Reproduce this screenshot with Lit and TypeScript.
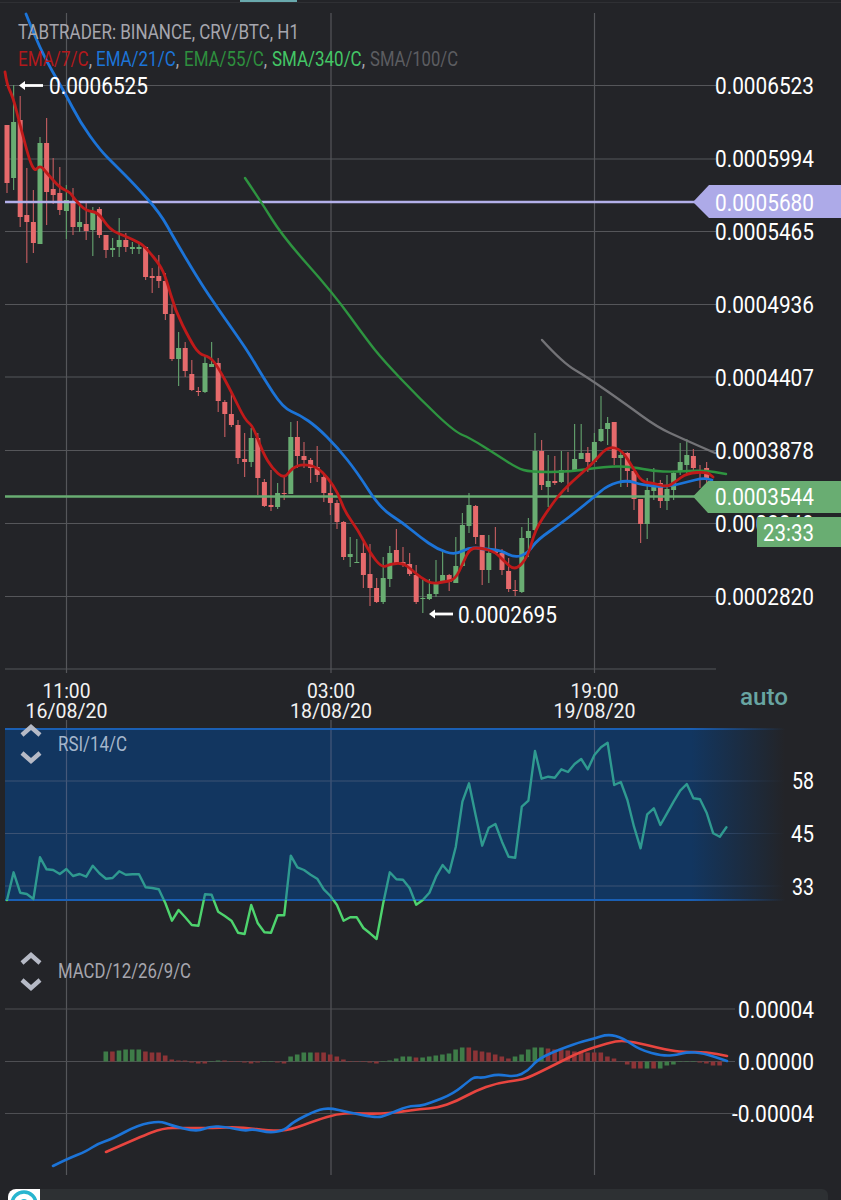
import { LitElement, css, html, svg } from 'lit';
import { customElement } from 'lit/decorators.js';

// candle x position, 6.6px per hour
const cx = (i: number) => 7 + 6.6 * i;

// [bodyTop, bodyBottom, wickTop, wickBottom, 1 = green]
const CANDLES: number[][] = [
  [125,183,125,193,0],[122,178,85,190,1],[120,217,96,227,0],[215,222,168,263,0],[222,243,190,253,0],
  [143,244,137,244,1],[143,192,118,225,0],[189,195,158,204,0],[193,210,167,215,0],[200,211,185,239,1],
  [202,227,188,235,0],[222,227,203,232,1],[224,231,203,240,0],[212,230,207,256,1],[209,235,207,238,0],
  [235,250,235,258,0],[248,250,238,257,1],[240,247,218,257,1],[240,247,233,252,0],[247,249,242,254,1],
  [247,249,242,254,1],[247,277,246,280,0],[276,278,268,293,0],[276,281,255,288,0],[281,314,273,320,0],
  [314,359,305,361,0],[348,359,332,386,1],[348,371,342,377,0],[374,390,360,391,0],[391,392,387,396,0],
  [363,392,355,393,1],[364,367,342,367,1],[363,401,358,412,0],[402,414,400,437,0],[414,425,393,427,0],
  [425,458,420,464,0],[459,462,433,477,0],[438,462,428,467,1],[438,478,433,495,0],[482,506,479,507,0],
  [505,507,470,511,0],[493,507,483,509,1],[493,494,477,500,0],[437,494,422,494,1],[437,456,421,468,0],
  [456,460,442,468,0],[460,468,458,483,0],[467,475,446,482,0],[477,493,475,502,0],[493,503,483,515,0],
  [503,522,500,529,0],[522,557,521,560,0],[554,557,537,567,1],[562,563,539,563,1],[553,575,542,588,0],
  [574,588,544,606,0],[588,602,578,603,0],[578,602,557,604,1],[553,579,546,587,1],[550,563,529,565,0],
  [562,564,547,567,0],[564,574,553,576,0],[575,602,565,604,0],[598,599,580,613,1],[594,599,579,600,1],
  [584,594,560,597,1],[575,581,552,583,1],[575,582,574,591,0],[566,583,537,583,1],[525,566,513,567,1],
  [505,526,493,533,1],[506,537,505,544,0],[535,570,535,585,0],[553,570,535,583,1],[549,553,527,553,0],
  [553,570,549,575,0],[571,589,558,592,0],[590,591,580,596,0],[538,592,527,593,1],[531,538,518,557,1],
  [451,530,433,531,1],[451,485,440,490,0],[481,487,455,507,1],[481,483,456,485,0],[470,482,451,483,1],
  [470,472,452,492,0],[459,471,424,472,1],[453,459,424,459,1],[453,462,447,472,0],[442,462,433,463,1],
  [429,441,396,442,1],[423,429,417,445,1],[422,458,422,465,0],[455,458,452,487,1],[453,471,452,487,0],
  [471,499,467,510,0],[499,524,499,543,0],[490,524,478,539,1],[487,491,468,500,1],[483,501,480,508,0],
  [489,501,475,510,1],[473,490,472,500,1],[462,472,443,475,1],[455,465,439,475,1],[456,468,449,470,0],
  [470,472,465,488,0],[468,478,462,487,0],
];

const EMA7 = '5,72 7,85 13,97 20,125 33,173 40,165 46,172 60,188 70,192 75,200 86,211 98,212 110,230 125,236 140,243 146,248 160,265 166,278 175,310 190,340 199,354 210,357 218,367 232,393 245,420 253,426 263,453 272,468 284,479 292,468 303,464 317,467 328,478 338,493 345,512 358,530 370,553 382,568 390,564 403,563 412,570 420,577 432,584 443,582 455,580 463,563 470,548 482,548 495,552 503,560 515,571 528,557 535,530 550,507 563,490 583,472 593,463 608,446 622,450 633,468 642,482 653,483 667,487 675,482 687,473 707,472 713,477';
const EMA21 = '26,14 40,50 65,93 80,122 100,150 115,165 135,185 160,213 175,240 197,277 212,300 240,340 250,355 263,377 283,408 300,415 317,427 337,447 357,472 380,508 403,523 420,537 437,549 455,555 470,547 483,549 500,550 515,558 528,553 537,540 563,522 593,498 608,485 627,480 642,485 667,487 687,482 703,478 712,480';
const EMA55 = '245,178 260,200 283,237 333,293 367,340 383,360 420,399 455,432 470,438 497,455 517,468 530,472 570,472 607,466 633,467 653,471 673,472 703,470 726,474';
const SMA100 = '542,340 563,363 587,377 627,405 657,427 683,439 715,453';

// zoom coordinates (3x) of the RSI pane, converted below
const RSI_A = [690,607,668,672,687,562,598,600,612,597,618,612,620,587,610,626,624,604,614,613,613,652,654,658,700,752,720,742,765,767,673,674,725,738,752,788,792,705,760,787,788,736,736,557,592,600,614,626,658,678,705,752,742,742,774,790,807,700,607,628,629,654,704,690,668,620,585,608,530,395,340,435,527,473,462,515,560,563,410,392,243,326,320,323,298,306,282,267,298,255,232,218,345,336,390,470,535,433,415,465,430,395,362,342,385,388,428,490,500,472];
const RSI = RSI_A.map((z, i) => `${cx(i).toFixed(1)},${(670 + z / 3).toFixed(1)}`).join(' ');

// [bar height above zero line, 1 = green]; starts at candle 15
const HIST: number[][] = [
  [10,1],[10,0],[11,1],[12,1],[12,1],[12,1],[10,0],[9,0],[9,0],[6,0],[2,0],[1,0],[1,0],[-1,0],[-2,0],[-2,0],[0.5,1],[1,1],[1,0],[0.5,0],
  [-0.5,0],[-1,0],[-2,0],[-1,0],[-0.5,1],[-0.5,1],[-1,0],[-2,0],[5,1],[7,1],[9,1],[9,1],[9,0],[9,0],[7,0],[5,0],[2,0],[0.5,0],[0.5,0],
  [-0.5,0],[-1,0],[-2,0],[-0.5,1],[1,1],[3,1],[5,1],[5,1],[4,0],[4,1],[5,1],[6,1],[7,1],[8,1],[12,1],[14,1],[14,0],[11,0],[10,0],[9,0],[7,0],[5,0],[3,0],
  [5,1],[7,1],[12,1],[14,1],[14,1],[13,0],[12,0],[12,0],[11,0],[10,0],[10,0],[9,0],[9,0],[9,0],[5,0],[3,0],[0.3,0],[-3,0],[-7,0],[-7,0],[-7,1],[-7,0],[-7,1],[-4,1],[-3,1],[-0.5,1],[-0.5,1],[-0.5,1],[-1,0],[-2,0],[-4,0],[-4,0],
];

const MACD_BLUE = '53,1166 67,1159 87,1151 97,1144 112,1139 138,1125 160,1121 170,1125 197,1132 210,1126 227,1127 245,1131 253,1129 270,1133 285,1130 293,1122 317,1110 330,1108 347,1112 377,1118 387,1115 408,1106 420,1106 430,1103 453,1094 470,1080 475,1077 483,1078 497,1074 515,1077 528,1071 537,1060 553,1052 580,1042 593,1039 608,1034 623,1038 640,1050 663,1056 677,1055 687,1052 703,1053 727,1061';
const MACD_RED = '106,1152 140,1137 163,1128 183,1128 213,1128 240,1127 273,1131 290,1130 317,1120 337,1114 353,1113 377,1114 400,1112 420,1109 437,1108 457,1101 475,1091 497,1083 520,1080 530,1077 560,1062 580,1052 608,1043 623,1040 647,1045 667,1050 683,1052 707,1052 727,1056';

const PRICES: [string, number][] = [
  ['0.0006523', 94], ['0.0005994', 167], ['0.0005465', 239.5], ['0.0004936', 313], ['0.0004407', 385.5],
  ['0.0003878', 458.5], ['0.0003349', 531.5], ['0.0002820', 604.5],
];

const GRID_Y = [85.5, 159, 231.5, 304.5, 377, 450.5, 523.5, 596.5, 669];
const GRID_X = [66.5, 331, 594.5];

// rounds the corners of a point list through the segment midpoints
const smooth = (points: string) => {
  const p = points.split(' ').map((s) => s.split(',').map(Number));
  let d = `M${p[0][0]} ${p[0][1]}`;
  for (let i = 1; i < p.length - 1; i++) {
    const mx = (p[i][0] + p[i + 1][0]) / 2;
    const my = (p[i][1] + p[i + 1][1]) / 2;
    d += `Q${p[i][0]} ${p[i][1]} ${mx} ${my}`;
  }
  const last = p[p.length - 1];
  return `${d}L${last[0]} ${last[1]}`;
};

const chevron = (x: number, y: number, up: boolean) => svg`
  <path class="chev" d=${up ? `M${x} ${y + 11}L${x + 9} ${y + 3}L${x + 18} ${y + 11}` : `M${x} ${y + 2}L${x + 9} ${y + 10}L${x + 18} ${y + 2}`}></path>`;

const arrow = (x: number, y: number) => svg`
  <path class="arrow" d="M${x + 24} ${y}H${x + 3}"></path>
  <path class="arrow-head" d="M${x} ${y}L${x + 6} ${y - 4.5}V${y + 4.5}Z"></path>`;

const label = (cls: string, x: number, y: number, w: number, t: string) => svg`
  <text class=${cls} x=${x} y=${y} textLength=${w} lengthAdjust="spacingAndGlyphs">${t}</text>`;

// legend entry with its trailing comma in the neutral colour
const legend = (cls: string, x: number, w: number, t: string, comma = true) => svg`
  <text class="leg ${cls}" x=${x} y="66" textLength=${w} lengthAdjust="spacingAndGlyphs">${t}${comma ? svg`<tspan class="leg-comma">,</tspan>` : ''}</text>`;

@customElement('app-root')
export class AppRoot extends LitElement {
  static styles = css`
    :host {
      display: block;
      width: 841px;
      height: 1200px;
      overflow: hidden;
      background: #232428;
    }

    .top {
      display: flex;
      height: 3px;
      border-bottom: 1px solid #2f3034;
      box-sizing: border-box;
      padding-left: 240px;
    }

    .tab {
      width: 57px;
      height: 2px;
      background: #69a9ad;
    }

    svg.chart {
      display: block;
      width: 841px;
      height: 1186px;
    }

    text {
      font-family: Roboto, "Noto Sans", sans-serif;
    }

    .grid { stroke: #55565a; stroke-width: 1.2; fill: none; }
    .grid-v { stroke: #55565a; stroke-width: 1.2; fill: none; }
    .grid-vb { stroke: #46597a; stroke-width: 1.2; fill: none; }
    .grid-m { stroke: #4e4f53; stroke-width: 1.2; fill: none; }
    .up { fill: #69ad72; }
    .down { fill: #e66a6c; }
    .wick-up { stroke: #5f9a69; stroke-width: 1.2; }
    .wick-down { stroke: #b9595c; stroke-width: 1.2; }
    .hist-up { fill: #3e7c48; }
    .hist-down { fill: #8c3437; }

    .ln { fill: none; stroke-width: 2.4; stroke-linejoin: round; stroke-linecap: round; }
    .ema7 { stroke: #c01a1a; stroke-width: 2.8; }
    .ema21 { stroke: #1c74d8; stroke-width: 2.8; }
    .ema55 { stroke: #2e9440; }
    .sma100 { stroke: #737377; }
    .rsi-low { stroke: #4ed46e; }
    .rsi-in { stroke: #2f9a90; }
    .macd-blue { stroke: #1c74d8; stroke-width: 2.6; }
    .macd-red { stroke: #e8453f; stroke-width: 2.6; }

    .purple-line { stroke: #b3b0ea; stroke-width: 2.6; }
    .green-line { stroke: #69ad72; stroke-width: 2.4; }
    .purple-tag { fill: #adaae8; }
    .green-tag { fill: #69ad72; }

    .chev { fill: none; stroke: #b6bac6; stroke-width: 4.4; }
    .arrow { stroke: #ffffff; stroke-width: 2.8; }
    .arrow-head { fill: #ffffff; }

    .price { font-size: 24.5px; fill: #ffffff; }
    .time { font-size: 19.5px; fill: #f2f2f2; }
    .auto { font-size: 23px; font-weight: 500; fill: #68a5a2; }
    .title { font-size: 20px; fill: #a6a6ae; }
    .rsi-title { font-size: 20px; fill: #a5b6cc; }
    .leg { font-size: 20px; }
    .leg-comma { fill: #a6a6ae; }
    .leg-red { fill: #b3191c; }
    .leg-blue { fill: #1c74d8; }
    .leg-green { fill: #2e8f3e; }
    .leg-lime { fill: #43c766; }
    .leg-grey { fill: #5c5d61; }

    .footer {
      display: flex;
      height: 11px;
      padding-left: 8px;
      padding-right: 13px;
    }

    .badge {
      width: 32px;
      height: 11px;
      overflow: hidden;
      background: #ffffff;
      border-top-left-radius: 8px;
    }

    .badge svg {
      display: block;
    }

    .bar {
      flex: 1;
      background: #2d3033;
      border-top-right-radius: 6px;
    }
  `;

  render() {
    return html`
      <div class="top"><div class="tab"></div></div>
      <svg class="chart" viewBox="0 3 841 1186" xmlns="http://www.w3.org/2000/svg">
        <defs>
          <linearGradient id="band" x1="5" x2="785" y1="0" y2="0" gradientUnits="userSpaceOnUse">
            <stop offset="0" stop-color="#123660"></stop>
            <stop offset="0.88" stop-color="#123660"></stop>
            <stop offset="1" stop-color="#123660" stop-opacity="0"></stop>
          </linearGradient>
          <linearGradient id="edge" x1="5" x2="785" y1="0" y2="0" gradientUnits="userSpaceOnUse">
            <stop offset="0" stop-color="#1a5fb4"></stop>
            <stop offset="0.88" stop-color="#1a5fb4"></stop>
            <stop offset="1" stop-color="#1a5fb4" stop-opacity="0"></stop>
          </linearGradient>
          <linearGradient id="band-grid" x1="5" x2="785" y1="0" y2="0" gradientUnits="userSpaceOnUse">
            <stop offset="0" stop-color="#3b5273"></stop>
            <stop offset="0.88" stop-color="#3b5273"></stop>
            <stop offset="1" stop-color="#3b5273" stop-opacity="0"></stop>
          </linearGradient>
          <clipPath id="in-band"><rect x="0" y="729" width="841" height="171"></rect></clipPath>
          <clipPath id="below-band"><rect x="0" y="900" width="841" height="60"></rect></clipPath>
        </defs>

        <!-- RSI band sits under the grid -->
        <rect x="5" y="729" width="780" height="171" fill="url(#band)"></rect>

        ${GRID_Y.map((y) => svg`<path class="grid" d="M5 ${y}H716"></path>`)}
        ${GRID_X.map((x) => svg`
          <path class="grid-v" d="M${x} 13V673"></path>
          <path class="grid-v" d="M${x} 720V729"></path>
          <path class="grid-vb" d="M${x} 729V900"></path>
          <path class="grid-v" d="M${x} 900V1175"></path>`)}
        ${[781, 833.5, 886].map((y) => svg`<path d="M5 ${y}H785" stroke="url(#band-grid)" stroke-width="1.2" fill="none"></path>`)}
        ${[1009, 1061.5, 1113.5].map((y) => svg`<path class="grid-m" d="M5 ${y}H735"></path>`)}

        <!-- candles -->
        ${CANDLES.map((c, i) => {
          const x = cx(i);
          return svg`
            <path class=${c[4] ? 'wick-up' : 'wick-down'} d="M${x} ${c[2]}V${c[3]}"></path>
            <rect class=${c[4] ? 'up' : 'down'} x=${x - 2.5} y=${c[0]} width="5" height=${Math.max(c[1] - c[0], 1)}></rect>`;
        })}

        <path class="purple-line" d="M5 202H695"></path>
        <path class="green-line" d="M5 496.5H695"></path>

        <path class="ln sma100" d=${smooth(SMA100)}></path>
        <path class="ln ema55" d=${smooth(EMA55)}></path>
        <path class="ln ema21" d=${smooth(EMA21)}></path>
        <path class="ln ema7" d=${smooth(EMA7)}></path>

        <!-- legend -->
        ${label('title', 18, 39, 281, 'TABTRADER: BINANCE, CRV/BTC, H1')}
        ${legend('leg-red', 18, 74, 'EMA/7/C')}
        ${legend('leg-blue', 96, 83, 'EMA/21/C')}
        ${legend('leg-green', 184, 83, 'EMA/55/C')}
        ${legend('leg-lime', 272, 93, 'SMA/340/C')}
        ${legend('leg-grey', 370, 88, 'SMA/100/C', false)}

        ${arrow(19, 85.5)}
        ${label('price', 49, 94, 99, '0.0006525')}
        ${arrow(429, 614)}
        ${label('price', 458, 623, 99, '0.0002695')}

        <!-- price axis -->
        ${PRICES.map(([t, y]) => label('price', 715, y, 99, t))}

        <path class="purple-tag" d="M693 202L709 185H841V218H709Z"></path>
        ${label('price', 715, 210.5, 99, '0.0005680')}
        <path class="green-tag" d="M693 496.5L708 481H841V513H708Z"></path>
        ${label('price', 715, 505, 99, '0.0003544')}
        <rect class="green-tag" x="757" y="517" width="84" height="30"></rect>
        ${label('price', 763, 541, 51, '23:33')}

        <!-- time axis -->
        ${[['11:00', '16/08/20', 66.5], ['03:00', '18/08/20', 331], ['19:00', '19/08/20', 594.5]].map(
          ([a, b, x]) => svg`
            ${label('time', (x as number) - 24, 698, 48, a as string)}
            ${label('time', (x as number) - 41, 718, 82, b as string)}`
        )}
        ${label('auto', 740, 705, 48, 'auto')}

        <!-- RSI pane -->
        <path d="M5 729H785" stroke="url(#edge)" stroke-width="1.8" fill="none"></path>
        <path d="M5 900H785" stroke="url(#edge)" stroke-width="1.8" fill="none"></path>
        <polyline class="ln rsi-in" clip-path="url(#in-band)" points=${RSI}></polyline>
        <polyline class="ln rsi-low" clip-path="url(#below-band)" points=${RSI}></polyline>
        ${chevron(22, 724, true)}
        ${chevron(22, 751, false)}
        ${label('rsi-title', 58, 751, 69, 'RSI/14/C')}
        ${label('price', 792, 789, 22, '58')}
        ${label('price', 791, 842, 23, '45')}
        ${label('price', 792, 895, 22, '33')}

        <!-- MACD pane -->
        ${chevron(22, 952, true)}
        ${chevron(22, 978, false)}
        ${label('title', 58, 978, 133, 'MACD/12/26/9/C')}
        ${HIST.map((h, i) => {
          const x = cx(i + 15) - 2.5;
          const y = h[0] > 0 ? 1061.5 - h[0] : 1061.5;
          return svg`<rect class=${h[1] ? 'hist-up' : 'hist-down'} x=${x} y=${y} width="4.6" height=${Math.abs(h[0])}></rect>`;
        })}
        <path class="ln macd-red" d=${smooth(MACD_RED)}></path>
        <path class="ln macd-blue" d=${smooth(MACD_BLUE)}></path>
        ${label('price', 738, 1018, 76, '0.00004')}
        ${label('price', 738, 1070, 76, '0.00000')}
        ${label('price', 732, 1122, 82, '-0.00004')}
      </svg>
      <div class="footer">
        <div class="badge">
          <svg width="32" height="11" viewBox="0 0 32 11">
            <circle cx="16" cy="15" r="12" fill="none" stroke="#27b5cf" stroke-width="3.5"></circle>
            <circle cx="16" cy="15" r="5" fill="#27b5cf"></circle>
          </svg>
        </div>
        <div class="bar"></div>
      </div>
    `;
  }
}
